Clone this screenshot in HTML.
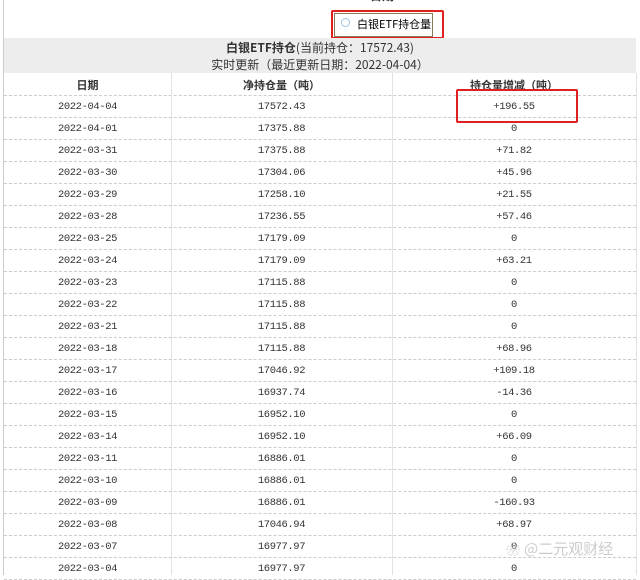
<!DOCTYPE html>
<html><head><meta charset="utf-8"><style>
body{margin:0;width:640px;height:575px;overflow:hidden;background:#fff;font-family:"Liberation Mono","Noto Sans CJK SC",monospace;color:#333;position:relative}
.abs{position:absolute}
.row{position:absolute;left:4px;width:632px;height:22px;border-bottom:1px dashed #ccc;font-size:10.5px;letter-spacing:-0.4px;line-height:22px}
.row span{position:absolute;top:1px;text-align:center}
.c1{left:0;width:167px}.c2{left:167px;width:221px}.c3{left:388px;width:244px}
.vl{position:absolute;top:73px;bottom:0;width:1px;background:#e2e2e2}
</style></head><body>
<div class="abs" style="left:3px;top:0;width:1px;height:575px;background:#ccc"></div>
<div class="abs" style="left:370px;top:-13px;font-size:12px;font-weight:bold;font-family:'Noto Sans CJK SC',sans-serif">日期</div>
<div class="abs" style="left:334px;top:13px;width:97px;height:22px;border:1px solid #8a7a5a;background:#fff"></div>
<div class="abs" style="left:341px;top:18px;width:7px;height:7px;border:1.5px solid #9cc4e4;border-radius:50%"></div>
<div class="abs" style="left:357px;top:16px;font-size:11px;font-family:'Noto Sans CJK SC',sans-serif;color:#000">白银ETF持仓量</div>
<div class="abs" style="left:331px;top:10px;width:109px;height:25px;border:2px solid #e02020;border-radius:2px"></div>
<div class="abs" style="left:4px;top:38px;width:632px;height:35px;background:#ededed"></div>
<div class="abs" style="left:4px;top:40px;width:632px;text-align:center;font-size:12px;line-height:15px;font-family:'Noto Sans CJK SC',sans-serif"><b>白银ETF持仓</b>(当前持仓：17572.43)</div>
<div class="abs" style="left:4px;top:57px;width:632px;text-align:center;font-size:12px;line-height:15px;font-family:'Noto Sans CJK SC',sans-serif">实时更新（最近更新日期：2022-04-04）</div>
<div class="row" style="top:73px;font-weight:bold;font-family:'Noto Sans CJK SC',sans-serif;font-size:11px;letter-spacing:0"><span class="c1">日期</span><span class="c2">净持仓量（吨）</span><span class="c3">持仓量增减（吨）</span></div>
<div class="vl" style="left:171px"></div><div class="vl" style="left:392px"></div><div class="vl" style="left:636px"></div>
<div id="rows"></div>
<div class="abs" style="left:456px;top:89px;width:118px;height:30px;border:2px solid #e02020;border-radius:2px"></div>
<div class="abs" style="left:524px;top:538px;font-size:15px;color:#ccc;font-family:'Noto Sans CJK SC',sans-serif">@二元观财经</div>
<div class="abs" style="left:506px;top:540px;font-size:14px;color:#ccc">❀</div>
<script>
var d=[["2022-04-04","17572.43","+196.55"],["2022-04-01","17375.88","0"],["2022-03-31","17375.88","+71.82"],["2022-03-30","17304.06","+45.96"],["2022-03-29","17258.10","+21.55"],["2022-03-28","17236.55","+57.46"],["2022-03-25","17179.09","0"],["2022-03-24","17179.09","+63.21"],["2022-03-23","17115.88","0"],["2022-03-22","17115.88","0"],["2022-03-21","17115.88","0"],["2022-03-18","17115.88","+68.96"],["2022-03-17","17046.92","+109.18"],["2022-03-16","16937.74","-14.36"],["2022-03-15","16952.10","0"],["2022-03-14","16952.10","+66.09"],["2022-03-11","16886.01","0"],["2022-03-10","16886.01","0"],["2022-03-09","16886.01","-160.93"],["2022-03-08","17046.94","+68.97"],["2022-03-07","16977.97","0"],["2022-03-04","16977.97","0"]];
var h="";d.forEach(function(r,i){h+='<div class="row" style="top:'+(95+i*22)+'px"><span class="c1">'+r[0]+'</span><span class="c2">'+r[1]+'</span><span class="c3">'+r[2]+'</span></div>'});
document.getElementById("rows").innerHTML=h;
</script>
</body></html>
